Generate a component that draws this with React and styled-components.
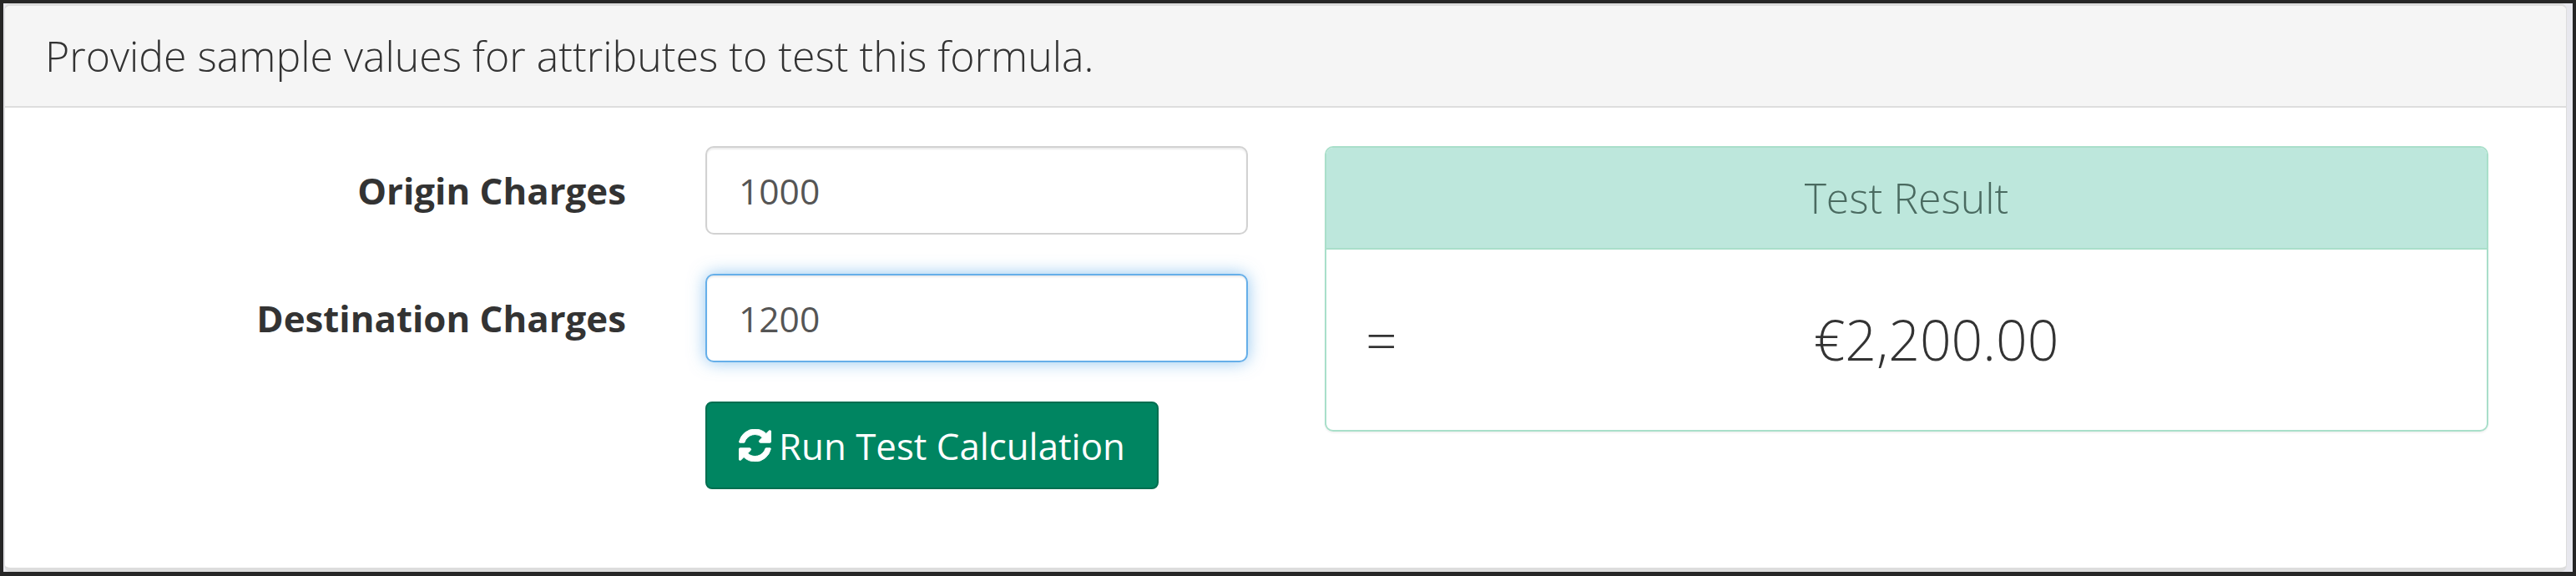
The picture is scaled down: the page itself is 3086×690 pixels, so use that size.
import React from "react";
import styled, { createGlobalStyle } from "styled-components";

const GlobalStyle = createGlobalStyle`
  html, body {
    margin: 0;
    padding: 0;
    background: #fff;
  }
  body {
    font-family: "Open Sans", "Liberation Sans", sans-serif;
    color: #333;
  }
`;

const Frame = styled.div`
  box-sizing: border-box;
  width: 3086px;
  height: 690px;
  border: 4px solid #262626;
  border-bottom-width: 5px;
  background: #e8e8ee;
  padding: 0 0 0 1px;
`;

const Panel = styled.section`
  box-sizing: border-box;
  height: 100%;
  margin-right: 7px;
  border: 1px solid #ddd;
  border-top-width: 3px;
  border-bottom-width: 5px;
  border-radius: 8px;
  background: #fff;
  overflow: hidden;
`;

const PanelHeader = styled.header`
  box-sizing: border-box;
  height: 122px;
  padding: 0 0 0 48px;
  display: flex;
  align-items: center;
  background: #f5f5f5;
  border-bottom: 2px solid #ddd;
  font-size: 50px;
  font-weight: 300;
  color: #333;
`;

const PanelBody = styled.div`
  display: flex;
  align-items: flex-start;
  padding: 46px 0 0 0;
`;

const FormColumn = styled.div`
  width: 1581px;
  flex-shrink: 0;
  display: flex;
  flex-direction: column;
  gap: 47px;
`;

const FieldRow = styled.div`
  display: flex;
  align-items: center;
  height: 106px;
`;

const FieldLabel = styled.label`
  width: 744px;
  text-align: right;
  font-size: 43.8px;
  font-weight: 700;
  color: #333;
`;

const TextInput = styled.input`
  box-sizing: border-box;
  margin-left: 95px;
  width: 650px;
  height: 106px;
  padding: 0 38px;
  font-family: inherit;
  font-size: 42.5px;
  color: #555;
  background: #fff;
  border-radius: 10px;
  outline: none;
  border: 2px solid ${(p) => (p.$focused ? "#66afe9" : "#d2d2d2")};
  box-shadow: ${(p) =>
    p.$focused
      ? "inset 0 2px 2px rgba(0,0,0,.075), 0 0 20px rgba(102,175,233,.7)"
      : "inset 0 2px 2px rgba(0,0,0,.075)"};
`;

const ActionRow = styled.div`
  padding-left: 839px;
`;

const RunButton = styled.button`
  box-sizing: border-box;
  width: 543px;
  height: 105px;
  display: flex;
  align-items: center;
  justify-content: center;
  gap: 9px;
  padding: 0;
  font-family: inherit;
  font-size: 43.8px;
  color: #fff;
  background: #008561;
  border: 2px solid #006e50;
  border-radius: 8px;
`;

const RefreshIcon = styled.svg`
  width: 39px;
  height: 39px;
  fill: currentColor;
  stroke: currentColor;
  stroke-width: 36;
  flex-shrink: 0;
`;

const ResultCard = styled.div`
  box-sizing: border-box;
  width: 1394px;
  height: 342px;
  border: 2px solid #a9dfca;
  border-radius: 10px;
  background: #fff;
  overflow: hidden;
  box-shadow: 0 2px 2px rgba(0, 0, 0, 0.05);
`;

const ResultHeader = styled.div`
  box-sizing: border-box;
  height: 122px;
  display: flex;
  align-items: center;
  justify-content: center;
  background: #bde7dc;
  border-bottom: 2px solid #a9dfca;
  font-size: 50px;
  font-weight: 300;
  color: #4a6a60;
`;

const ResultBody = styled.div`
  display: flex;
  align-items: center;
  height: 214px;
  padding: 0 0 0 47px;
  font-size: 66px;
  font-weight: 300;
  color: #333;
`;

const EqualSign = styled.span`
  width: 40px;
`;

const ResultValue = styled.span`
  flex: 1;
  text-align: center;
  padding-right: 16px;
`;

export default function App() {
  return (
    <>
      <GlobalStyle />
      <Frame>
        <Panel>
          <PanelHeader>Provide sample values for attributes to test this formula.</PanelHeader>
          <PanelBody>
            <FormColumn>
              <FieldRow>
                <FieldLabel>Origin Charges</FieldLabel>
                <TextInput defaultValue="1000" />
              </FieldRow>
              <FieldRow>
                <FieldLabel>Destination Charges</FieldLabel>
                <TextInput $focused defaultValue="1200" />
              </FieldRow>
              <ActionRow>
                <RunButton>
                  <RefreshIcon viewBox="128 128 1536 1536">
                    <path d="M1639 1056q0 5-1 7-64 268-268 434.5t-478 166.5q-146 0-282.5-55t-243.5-157l-129 129q-19 19-45 19t-45-19-19-45v-448q0-26 19-45t45-19h448q26 0 45 19t19 45-19 45l-137 137q71 66 161 102t187 36q134 0 250-65t186-179q11-17 53-117 8-23 30-23h192q13 0 22.5 9.5t9.5 22.5zm25-800v448q0 26-19 45t-45 19h-448q-26 0-45-19t-19-45 19-45l138-138q-148-137-349-137-134 0-250 65t-186 179q-11 17-53 117-8 23-30 23h-199q-13 0-22.5-9.5t-9.5-22.5v-7q65-268 270-434.5t480-166.5q146 0 284 55.5t245 156.5l130-129q19-19 45-19t45 19 19 45z" />
                  </RefreshIcon>
                  Run Test Calculation
                </RunButton>
              </ActionRow>
            </FormColumn>
            <ResultCard>
              <ResultHeader>Test Result</ResultHeader>
              <ResultBody>
                <EqualSign>=</EqualSign>
                <ResultValue>€2,200.00</ResultValue>
              </ResultBody>
            </ResultCard>
          </PanelBody>
        </Panel>
      </Frame>
    </>
  );
}
